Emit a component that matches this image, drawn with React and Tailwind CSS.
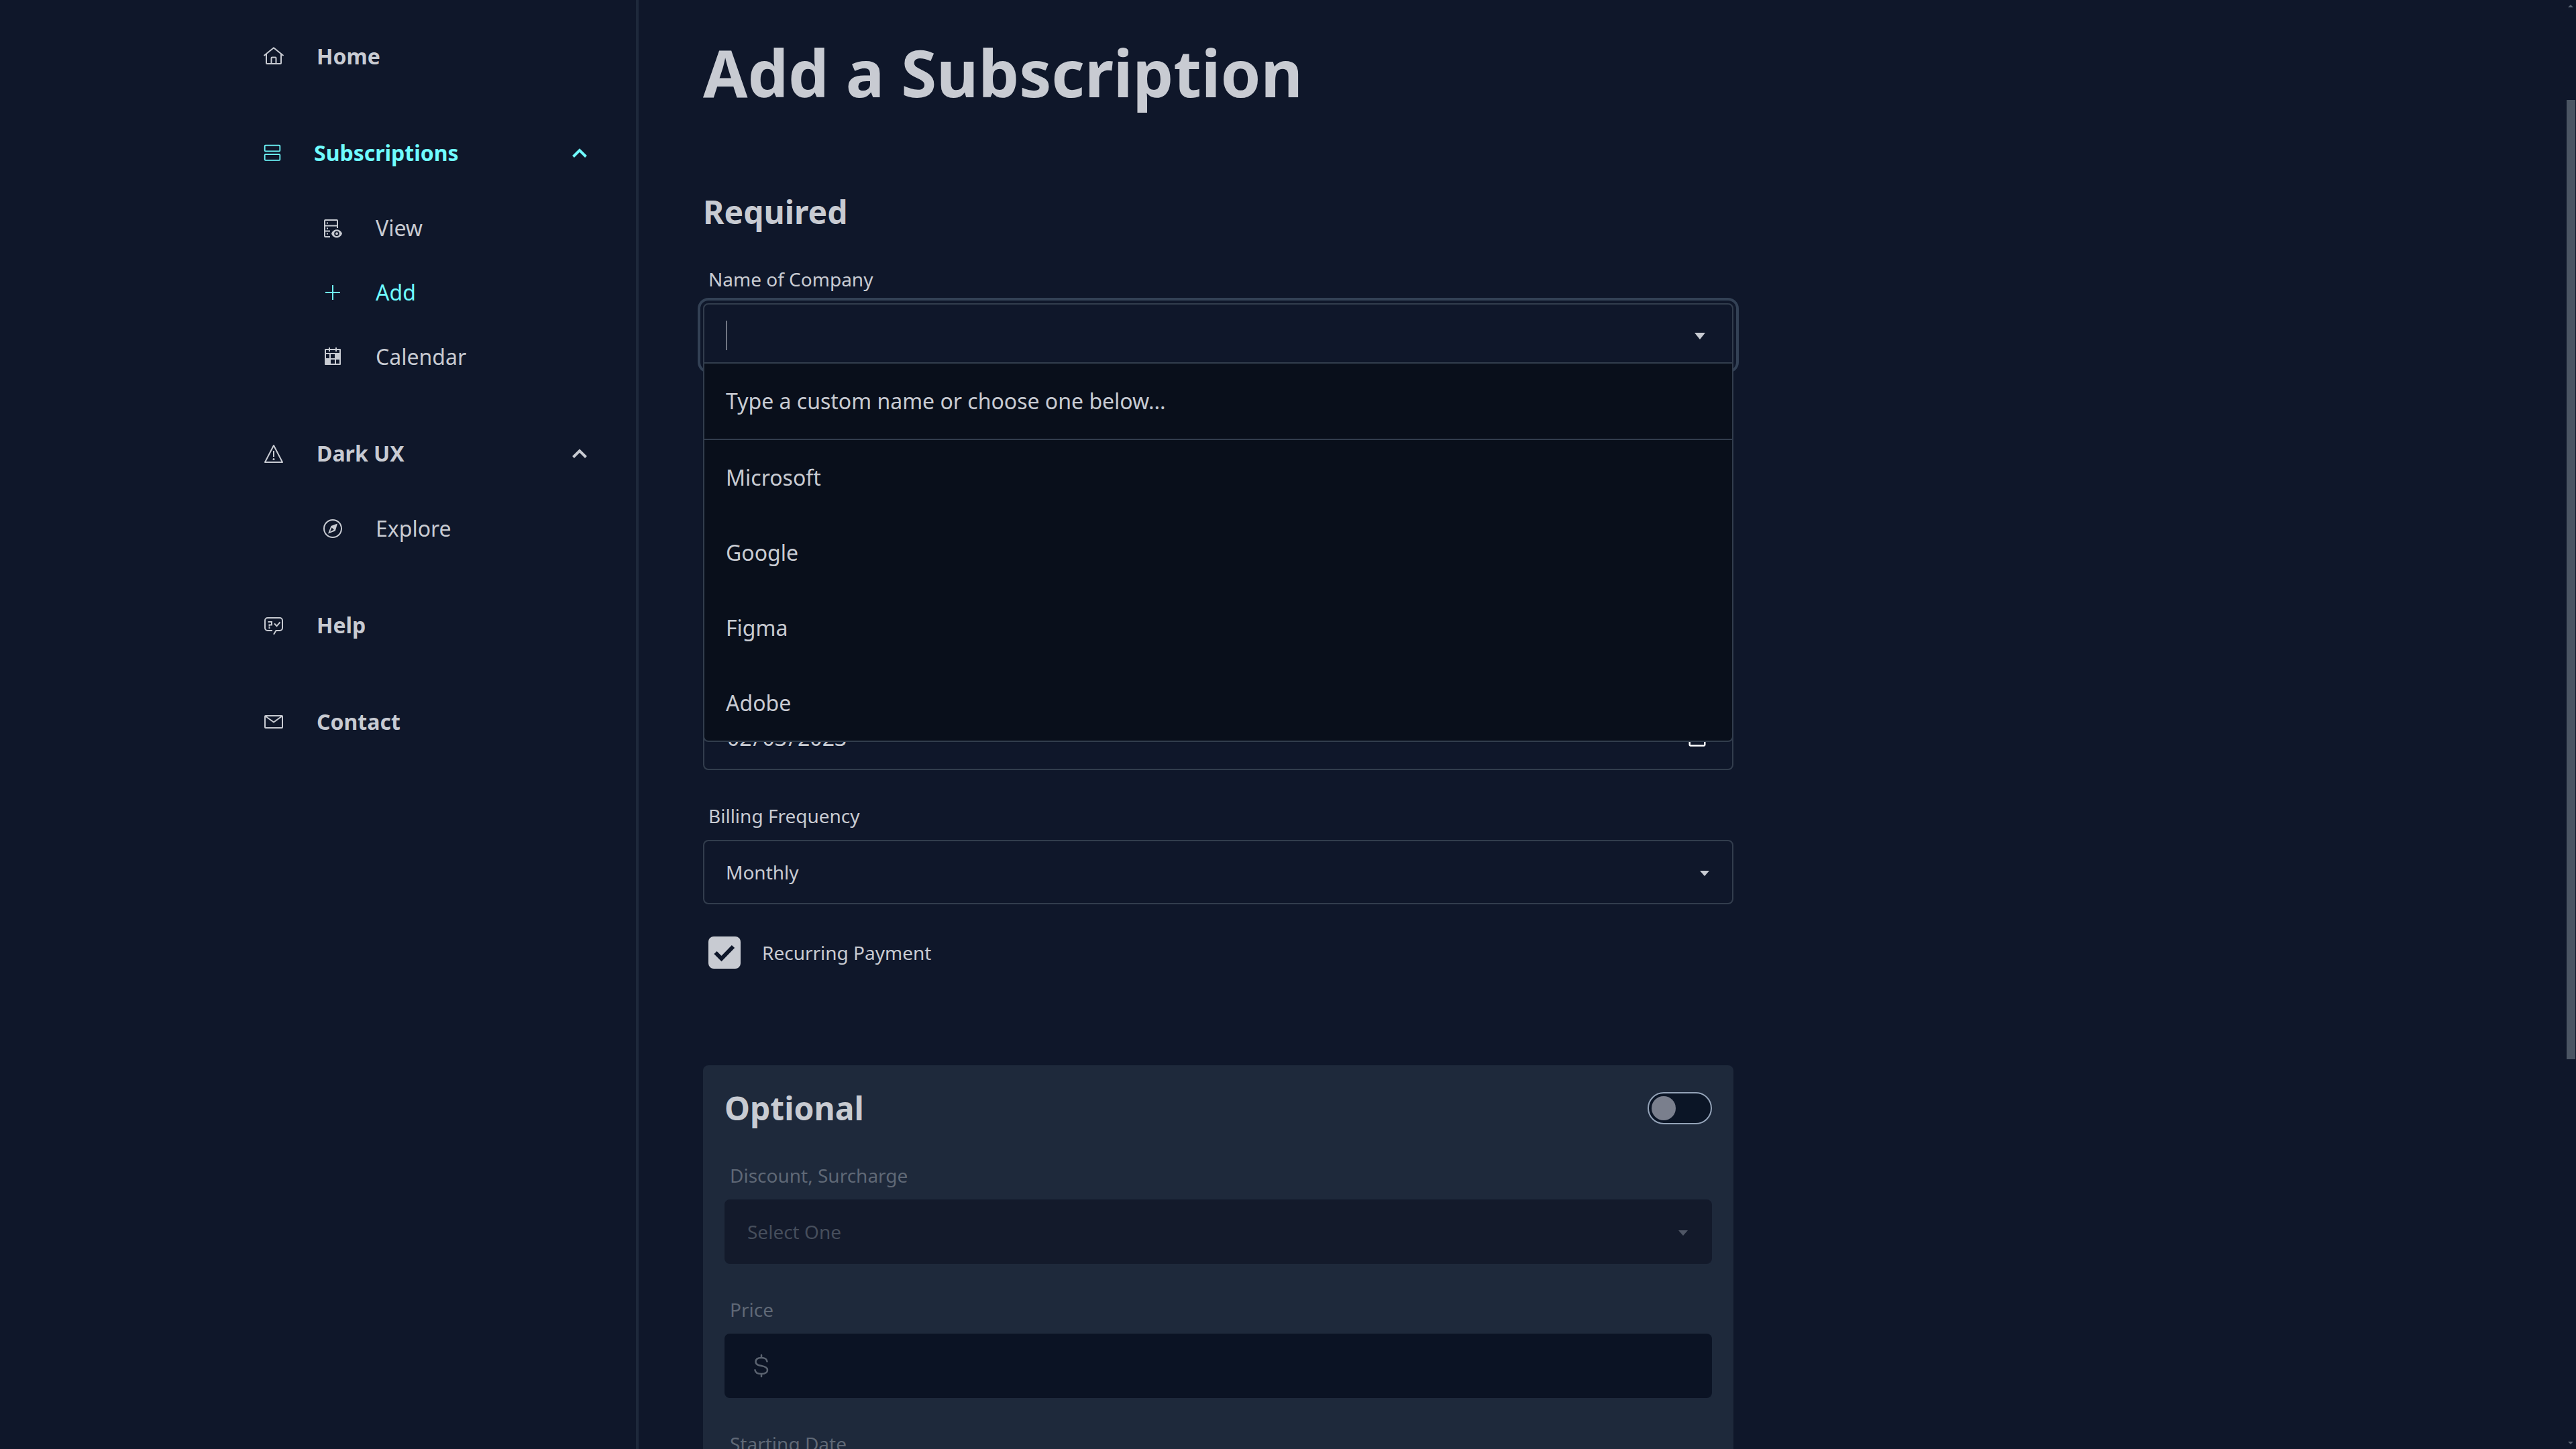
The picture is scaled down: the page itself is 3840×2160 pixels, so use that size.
import React from "react";

const line = { fill: "none", stroke: "currentColor", strokeWidth: 2 };

function Icon({ children, className = "w-8", viewBox = "0 0 32 32" }) {
  return (
    <svg aria-hidden="true" viewBox={viewBox} className={`h-8 shrink-0 ${className}`}>
      {children}
    </svg>
  );
}

const HomeIcon = () => (
  <Icon>
    <path {...line} strokeLinejoin="round" d="M1.5 15 16 3.2 30.5 15M5 12.5V26a1 1 0 0 0 1 1h20a1 1 0 0 0 1-1V12.5M12.5 27v-8.500a1 1 0 0 1 1-1h5a1 1 0 0 1 1 1V27" />
  </Icon>
);

const RowsIcon = () => (
  <Icon className="w-7" viewBox="0 0 28 32">
    <g {...line} strokeWidth="1.750">
      <rect x="2.7" y="4.700" width="22.600" height="8.600" rx="1" />
      <rect x="2.7" y="18.200" width="22.600" height="8.600" rx="1" />
    </g>
  </Icon>
);

const ViewIcon = () => (
  <Icon>
    <path {...line} strokeLinejoin="round" d="M12 29H5a1 1 0 0 1-1-1V5a1 1 0 0 1 1-1h17a1 1 0 0 1 1 1v11M4 12.500h19M4 20.500h8" />
    <path fill="currentColor" d="M7 7.500h2v2H7zM7 15.500h2v2H7zM7 23.500h2v2H7z" />
    <path
      fill="currentColor"
      fillRule="evenodd"
      d="M22 18.200c3.800 0 6.700 2.500 8 6-1.300 3.500-4.200 6-8 6s-6.700-2.500-8-6c1.300-3.500 4.200-6 8-6zm0 2.200a3.800 3.800 0 1 0 0 7.600 3.800 3.800 0 0 0 0-7.600z"
    />
    <circle cx="22" cy="24.200" r="1.900" fill="currentColor" />
  </Icon>
);

const PlusIcon = () => (
  <Icon>
    <path {...line} d="M16 5v22M5 16h22" />
  </Icon>
);

const CalendarIcon = () => (
  <Icon>
    <path
      fill="currentColor"
      fillRule="evenodd"
      d="M10 2h2v2h8V2h2v2h5a1 1 0 0 1 1 1v22a1 1 0 0 1-1 1H5a1 1 0 0 1-1-1V5a1 1 0 0 1 1-1h5zM6 6v4h20V6h-4v2h-2V6h-8v2h-2V6zM6 12v6h5v-6zM13 12v6h6v-6zM13 20v6h6v-6zM21 20v6h5v-6z"
    />
  </Icon>
);

const WarningIcon = () => (
  <Icon>
    <path {...line} strokeLinejoin="round" d="M16 4 29 29H3zM16 12v9" />
    <circle cx="16" cy="24.500" r="1.500" fill="currentColor" />
  </Icon>
);

const CompassIcon = () => (
  <Icon>
    <circle {...line} cx="16" cy="16" r="13" />
    <path fill="currentColor" fillRule="evenodd" d="M23 8.500 13.500 12 9 23.500 19.800 19.500zM14.600 14.500 17.800 17.800 12 20.500z" />
  </Icon>
);

const HelpIcon = () => (
  <Icon>
    <path {...line} d="M14 24H7a4 4 0 0 1-4-4V9a4 4 0 0 1 4-4h18a4 4 0 0 1 4 4v11a4 4 0 0 1-4 4h-5.500L16 29.800" />
    <path {...line} d="M7.500 11h5.500v4.500H9.500v2.500M17 13.500l3.500 3.800 5-5.800" />
    <path fill="currentColor" d="M8.500 19h2v2h-2z" />
  </Icon>
);

const MailIcon = () => (
  <Icon>
    <rect {...line} x="3" y="7" width="26" height="18" rx="1" />
    <path {...line} d="M3.500 7.500 16 16.500 28.500 7.500" />
  </Icon>
);

const ChevronUp = () => (
  <Icon>
    <path {...line} strokeWidth="4" d="m6.500 21.500 9.500-9.500 9.500 9.500" />
  </Icon>
);

function Caret({ className, tall = false }) {
  return (
    <svg
      aria-hidden="true"
      viewBox="0 0 16 10"
      preserveAspectRatio="none"
      className={`pointer-events-none absolute top-1/2 ${tall ? "h-[10px] w-4 -translate-y-1" : "h-2 w-[14px] -translate-y-[2px]"} ${className}`}
    >
      <path fill="currentColor" d="M0 0h16L8 10z" />
    </svg>
  );
}

function TopLink({ icon, children }) {
  return (
    <a href="#" className="flex h-12 items-center gap-12 font-bold">
      {icon}
      {children}
    </a>
  );
}

function SubLink({ icon, children, active = false }) {
  return (
    <li>
      <a href="#" className={`flex h-12 items-center gap-12 ${active ? "text-[#6ffcff]" : ""}`}>
        {icon}
        {children}
      </a>
    </li>
  );
}

function Group({ icon, label, active = false, children }) {
  return (
    <div>
      <button type="button" aria-expanded="true" className={`flex h-12 w-full items-center gap-12 text-left font-bold ${active ? "text-[#6ffcff]" : ""}`}>
        {icon}
        <span className="grow">{label}</span>
        <ChevronUp />
      </button>
      <ul className="mt-16 flex flex-col gap-12 pl-[88px]">{children}</ul>
    </div>
  );
}

function Sidebar() {
  return (
    <nav className="flex w-[576px] shrink-0 flex-col gap-24 border-r-4 border-[#1e293b] pt-[60px] pr-[68px] pl-4 text-[32px] leading-[48px]">
      <TopLink icon={<HomeIcon />}>Home</TopLink>
      <Group icon={<RowsIcon />} label="Subscriptions" active>
        <SubLink icon={<ViewIcon />}>View</SubLink>
        <SubLink icon={<PlusIcon />} active>Add</SubLink>
        <SubLink icon={<CalendarIcon />}>Calendar</SubLink>
      </Group>
      <Group icon={<WarningIcon />} label="Dark UX">
        <SubLink icon={<CompassIcon />}>Explore</SubLink>
      </Group>
      <TopLink icon={<HelpIcon />}>Help</TopLink>
      <TopLink icon={<MailIcon />}>Contact</TopLink>
    </nav>
  );
}

const control = "block h-24 w-full appearance-none rounded-lg border-2 border-[#323d4d] bg-transparent px-8 outline-none";
const disabledControl = "block h-24 w-full appearance-none rounded-lg px-[34px] outline-none";
const dateParts =
  "[&::-webkit-datetime-edit-month-field]:px-0.5 [&::-webkit-datetime-edit-day-field]:px-0.5 [&::-webkit-datetime-edit-year-field]:px-0.5 [&::-webkit-calendar-picker-indicator]:mr-0.5";

function Field({ id, label, children, dim = false }) {
  return (
    <div className="flex flex-col gap-4">
      <label htmlFor={id} className={`px-2 text-[28px] leading-10 ${dim ? "text-[#5f6876]" : ""}`}>
        {label}
      </label>
      <div className="relative">{children}</div>
    </div>
  );
}

const companies = ["Microsoft", "Google", "Figma", "Adobe"];

function CompanyField() {
  return (
    <Field id="company" label="Name of Company">
      <input
        id="company"
        role="combobox"
        aria-expanded="true"
        aria-controls="company-list"
        className={`${control} text-[32px] ring-4 ring-[#334155] ring-offset-4 ring-offset-[#0f172a]`}
      />
      <span aria-hidden="true" className="absolute top-[26px] left-[34px] h-11 w-px bg-[#c8cbd2]" />
      <Caret tall className="right-[42px]" />
      <div className="absolute inset-x-0 top-[88px] z-10 rounded-b-lg border-2 border-[#323d4d] bg-[#090f1b] text-[32px] leading-[48px]">
        <p className="border-b-2 border-[#323d4d] px-8 py-8">Type a custom name or choose one below...</p>
        <ul id="company-list" role="listbox" aria-label="Companies">
          {companies.map((name) => (
            <li key={name} role="option" aria-selected="false" className="px-8 py-8">
              {name}
            </li>
          ))}
        </ul>
      </div>
    </Field>
  );
}

function RequiredSection() {
  return (
    <section className="mt-32 flex flex-col gap-12">
      <h2 className="text-[48px] leading-[64px] font-bold">Required</h2>
      <CompanyField />
      <Field id="plan" label="Name of Plan">
        <input id="plan" className={`${control} text-[32px]`} />
      </Field>
      <Field id="price" label="Price">
        <input id="price" className={`${control} text-[32px]`} />
      </Field>
      <Field id="start" label="Starting Date">
        <input id="start" type="date" defaultValue="2023-02-03" className={`${control} ${dateParts} text-[32px] [color-scheme:dark]`} />
      </Field>
      <Field id="frequency" label="Billing Frequency">
        <select id="frequency" className={`${control} text-[28px]`}>
          <option>Monthly</option>
        </select>
        <Caret className="right-9" />
      </Field>
      <div className="flex h-12 items-center gap-8 px-2">
        <span className="relative block size-12">
          <input id="recurring" type="checkbox" defaultChecked className="block size-12 appearance-none rounded-lg bg-[#c8cbd2]" />
          <svg aria-hidden="true" viewBox="0 0 48 48" className="pointer-events-none absolute inset-0 size-12">
            <path fill="none" stroke="#0f172a" strokeWidth="6" d="m10.500 24 9 9L37 15" />
          </svg>
        </span>
        <label htmlFor="recurring" className="text-[28px] leading-10">
          Recurring Payment
        </label>
      </div>
    </section>
  );
}

function OptionalSection() {
  return (
    <section className="mt-36 flex flex-col gap-12 rounded-lg bg-[#1e293b] p-8">
      <div className="flex items-center justify-between">
        <h2 className="text-[48px] leading-[64px] font-bold">Optional</h2>
        <button
          type="button"
          role="switch"
          aria-checked="false"
          aria-label="Optional"
          className="flex h-12 w-24 items-center rounded-full border-2 border-[#94a3b8] bg-[#0b1526] px-1"
        >
          <span className="size-9 rounded-full bg-[#7a7f8d]" />
        </button>
      </div>
      <Field id="adjustment" label="Discount, Surcharge" dim>
        <select id="adjustment" disabled className={`${disabledControl} bg-[#131a2b] text-[28px] text-[#464e5c] opacity-100`}>
          <option>Select One</option>
        </select>
        <Caret className="right-9 text-[#505766]" />
      </Field>
      <Field id="optional-price" label="Price" dim>
        <input id="optional-price" disabled className={`${disabledControl} bg-[#0b1324] text-[32px]`} />
        <svg aria-hidden="true" viewBox="0 0 24 36" className="absolute top-[30px] left-[43px] h-9 w-6 text-[#5b6370]">
          <path
            {...line}
            strokeWidth="2.500"
            strokeLinecap="round"
            d="M12 2v4M12 30v4M20.500 11.500C20 8 17 6 12 6S3.500 8 3.500 12c0 4.500 4.500 5.300 8.500 6s9 1.800 9 6.300c0 3.700-3.500 5.700-9 5.700s-9-2-9.500-5.700"
          />
        </svg>
      </Field>
      <Field id="optional-start" label="Starting Date" dim>
        <input id="optional-start" disabled className={`${disabledControl} bg-[#0b1324] text-[32px]`} />
      </Field>
    </section>
  );
}

function Scrollbar() {
  return (
    <div aria-hidden="true" className="flex w-4 shrink-0 flex-col items-center py-[7px]">
      <svg viewBox="0 0 8 4" className="h-1 w-2">
        <path fill="#5a6472" d="M0 4h8L4 0z" />
      </svg>
      <div className="grow-[138]" />
      <div className="w-[13px] grow-[1430] bg-[#4b5563]" />
      <div className="grow-[570]" />
      <svg viewBox="0 0 8 4" className="h-1 w-2">
        <path fill="#5a6472" d="M0 0h8L4 4z" />
      </svg>
    </div>
  );
}

export default function App() {
  return (
    <div className="flex h-screen overflow-hidden bg-[#0f172a] font-['Noto_Sans',sans-serif] text-[#c8cbd2]">
      <div className="h-full min-w-0 grow overflow-hidden">
        <div className="mx-auto flex min-h-full max-w-[3072px]">
          <Sidebar />
          <main className="min-w-0 grow pt-[60px] pr-8 pb-24 pl-24">
            <form className="max-w-[1536px]">
              <h1 className="text-[96px] leading-[96px] font-bold">Add a Subscription</h1>
              <RequiredSection />
              <OptionalSection />
            </form>
          </main>
        </div>
      </div>
      <Scrollbar />
    </div>
  );
}
